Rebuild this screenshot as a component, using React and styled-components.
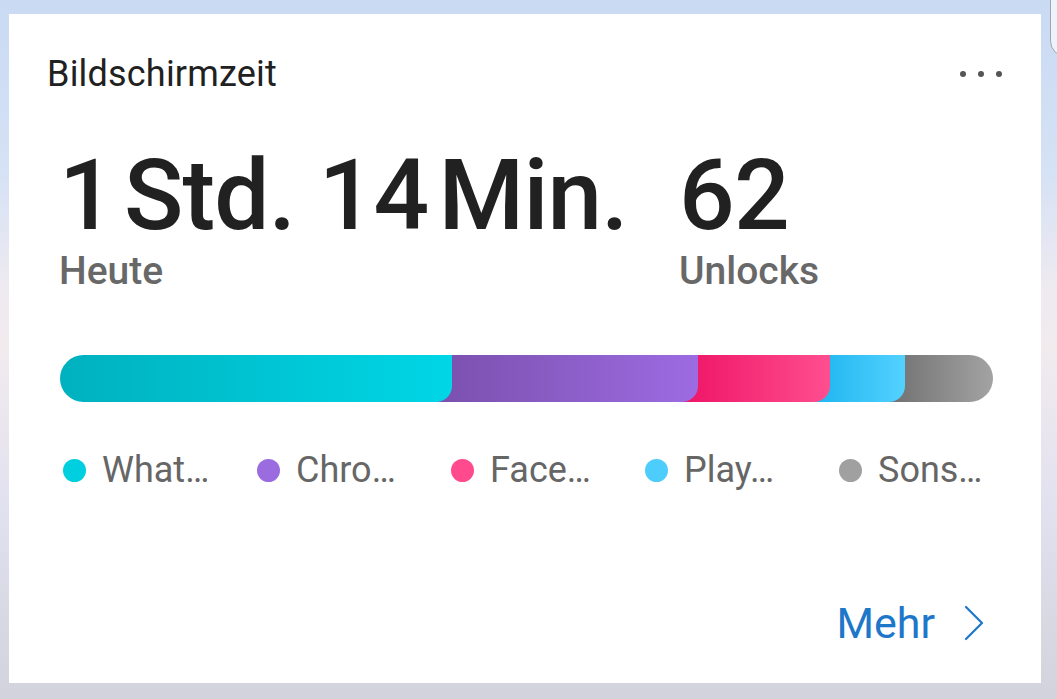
import React from "react";
import styled, { createGlobalStyle } from "styled-components";

const Global = createGlobalStyle`
  html, body { margin: 0; padding: 0; }
  body {
    width: 1057px;
    height: 699px;
    overflow: hidden;
    font-family: Roboto, "Noto Sans", "Liberation Sans", sans-serif;
    background: linear-gradient(180deg, #c9daf3 0%, #d6e2f5 25%, #efeaf0 42%, #f1ebee 50%, #e2e1ef 72%, #d2d3dc 100%);
  }
`;

const Page = styled.div`
  position: relative;
  width: 1057px;
  height: 699px;
  box-sizing: border-box;
  padding: 14px 16px 16px 9px;
`;

const EdgeWindow = styled.div`
  position: absolute;
  left: 1050px;
  top: -30px;
  width: 40px;
  height: 87px;
  box-sizing: border-box;
  border: 1.5px solid #9ea6b2;
  border-radius: 16px;
  background: #eef2fa;
`;

const Card = styled.div`
  width: 1032px;
  height: 669px;
  box-sizing: border-box;
  background: #ffffff;
  display: flex;
  flex-direction: column;
`;

const Header = styled.div`
  display: flex;
  align-items: center;
  justify-content: space-between;
  margin-top: 40px;
  padding: 0 39px 0 38px;
`;

const Title = styled.div`
  font-size: 36px;
  line-height: 40px;
  color: #212121;
  font-weight: 400;
  letter-spacing: 0.2px;
`;

const MoreDots = styled.div`
  display: flex;
  gap: 12px;
  align-items: center;
`;

const Dot = styled.span`
  width: 6px;
  height: 6px;
  border-radius: 50%;
  background: #555;
`;

const Stats = styled.div`
  display: flex;
  margin-top: 52px;
  padding-left: 50px;
`;

const StatCol = styled.div`
  display: flex;
  flex-direction: column;
  width: ${(p) => p.$w || "auto"};
`;

const BigLine = styled.div`
  font-size: 98px;
  line-height: 100px;
  font-weight: 500;
  color: #212121;
  white-space: nowrap;
  letter-spacing: -0.8px;
`;

const Unit = styled.span`
  margin-left: 10px;
`;

const Sub = styled.div`
  font-size: 39px;
  line-height: 44px;
  font-weight: 500;
  color: #686868;
  margin-top: 3px;
`;

const Bar = styled.div`
  display: flex;
  width: 933px;
  height: 47px;
  margin: 62px 0 0 51px;
  border-radius: 24px;
  overflow: hidden;
`;

const Segment = styled.div`
  position: relative;
  flex: 0 0 auto;
  height: 100%;
  z-index: ${(p) => p.$z};
  margin-left: ${(p) => (p.$first ? 0 : -16)}px;
  border-bottom-right-radius: ${(p) => (p.$last ? 0 : 16)}px;
  background: linear-gradient(90deg, ${(p) => p.$from}, ${(p) => p.$to});
`;

const Legend = styled.div`
  display: flex;
  margin: 46px 0 0 54px;
`;

const LegendItem = styled.div`
  display: flex;
  align-items: center;
  width: 194px;
  gap: 16px;
`;

const LegendDot = styled.span`
  width: 23px;
  height: 23px;
  border-radius: 50%;
  background: ${(p) => p.$c};
  flex: 0 0 auto;
`;

const LegendText = styled.span`
  font-size: 36px;
  line-height: 44px;
  color: #666666;
`;

const Footer = styled.div`
  margin-top: auto;
  display: flex;
  justify-content: flex-end;
  align-items: center;
  gap: 28px;
  padding: 0 56px 36px 0;
`;

const MoreLink = styled.span`
  font-size: 43px;
  line-height: 48px;
  color: #1e77c9;
`;

const segments = [
  { w: 392, from: "#00b1be", to: "#00d6e6" },
  { w: 246, from: "#7a50ad", to: "#9d6be2" },
  { w: 132, from: "#ee1466", to: "#ff4e8f" },
  { w: 75, from: "#1db5ef", to: "#53d1ff" },
  { w: 88, from: "#707070", to: "#a3a3a3" },
];

const legend = [
  { c: "#00cfdf", t: "What…" },
  { c: "#9b6be0", t: "Chro…" },
  { c: "#ff4a8d", t: "Face…" },
  { c: "#4ccdfc", t: "Play…" },
  { c: "#a0a0a0", t: "Sons…" },
];

export default function App() {
  return (
    <>
      <Global />
      <Page>
        <EdgeWindow />
        <Card>
          <Header>
            <Title>Bildschirmzeit</Title>
            <MoreDots>
              <Dot />
              <Dot />
              <Dot />
            </MoreDots>
          </Header>
          <Stats>
            <StatCol $w="620px">
              <BigLine>
                1<Unit>Std.</Unit> 14<Unit>Min.</Unit>
              </BigLine>
              <Sub>Heute</Sub>
            </StatCol>
            <StatCol>
              <BigLine>62</BigLine>
              <Sub>Unlocks</Sub>
            </StatCol>
          </Stats>
          <Bar>
            {segments.map((s, i) => (
              <Segment
                key={i}
                style={{ width: s.w + (i === 0 ? 0 : 16) }}
                $first={i === 0}
                $last={i === segments.length - 1}
                $z={segments.length - i}
                $from={s.from}
                $to={s.to}
              />
            ))}
          </Bar>
          <Legend>
            {legend.map((l, i) => (
              <LegendItem key={i}>
                <LegendDot $c={l.c} />
                <LegendText>{l.t}</LegendText>
              </LegendItem>
            ))}
          </Legend>
          <Footer>
            <MoreLink>Mehr</MoreLink>
            <svg width="22" height="36" viewBox="0 0 22 36" fill="none">
              <path d="M3 2 L19 18 L3 34" stroke="#1e77c9" strokeWidth="2.2" strokeLinecap="round" strokeLinejoin="round" />
            </svg>
          </Footer>
        </Card>
      </Page>
    </>
  );
}
